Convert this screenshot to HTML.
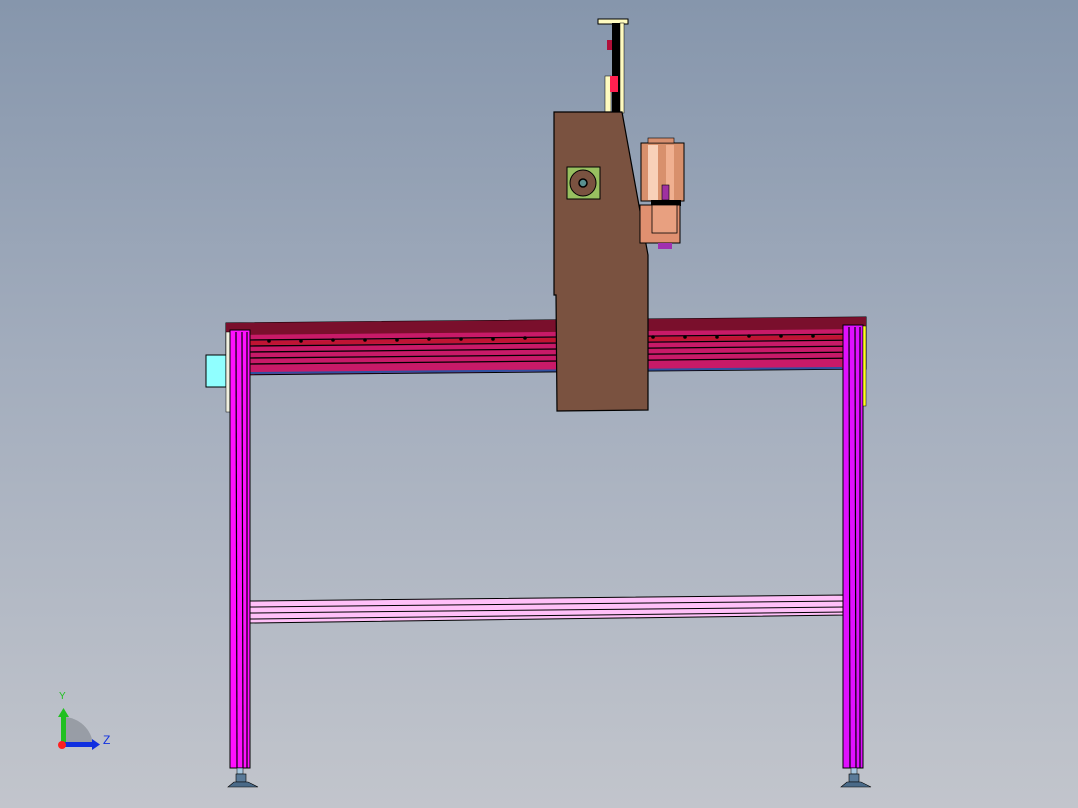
<!DOCTYPE html>
<html><head><style>
html,body{margin:0;padding:0;width:1078px;height:808px;overflow:hidden}
body{background:linear-gradient(#8696ac 0%,#a3adbd 45%,#c2c5cc 100%)}
svg{position:absolute;left:0;top:0}
</style></head><body>
<svg width="1078" height="808" viewBox="0 0 1078 808" xmlns="http://www.w3.org/2000/svg">
<!-- top beam -->
<polygon points="226,323 866,317 866,369 226,375" fill="#c81a68" stroke="#000" stroke-width="1"/>
<polygon points="226,323 866,317 866,329 226,335" fill="#7a0f2c"/>
<g stroke="#000" stroke-width="1.3">
<line x1="250" y1="340" x2="866" y2="334"/><line x1="250" y1="346" x2="866" y2="340"/>
<line x1="250" y1="352" x2="866" y2="346"/><line x1="250" y1="358" x2="866" y2="352"/>
<line x1="250" y1="364" x2="866" y2="358"/>
</g>
<polygon points="250,341 866,335 866,339 250,345" fill="#c01432"/>
<line x1="250" y1="373" x2="842" y2="368" stroke="#3050a0" stroke-width="2"/>
<g fill="#000">
<circle cx="269" cy="341" r="1.8"/><circle cx="301" cy="341" r="1.8"/><circle cx="333" cy="340" r="1.8"/><circle cx="365" cy="340" r="1.8"/><circle cx="397" cy="340" r="1.8"/><circle cx="429" cy="339" r="1.8"/><circle cx="461" cy="339" r="1.8"/><circle cx="493" cy="339" r="1.8"/><circle cx="525" cy="338" r="1.8"/>
<circle cx="653" cy="337" r="1.8"/><circle cx="685" cy="337" r="1.8"/><circle cx="717" cy="337" r="1.8"/><circle cx="749" cy="336" r="1.8"/><circle cx="781" cy="336" r="1.8"/><circle cx="813" cy="336" r="1.8"/>
</g>
<!-- cyan box -->
<rect x="206" y="355" width="20" height="32" fill="#90ffff" stroke="#000"/>
<rect x="226" y="332" width="4" height="80" fill="#f0f0e0" stroke="#000" stroke-width=".5"/>
<!-- lower crossbar -->
<polygon points="250,601 845,595 845,615 250,623" fill="#ffc0f8" stroke="#000"/>
<g stroke="#000" stroke-width="1"><line x1="250" y1="607" x2="845" y2="601"/><line x1="250" y1="613" x2="845" y2="607"/><line x1="250" y1="619" x2="845" y2="612"/></g>
<!-- legs -->
<rect x="230" y="330" width="20" height="438" fill="#ff10ff" stroke="#000"/>
<g stroke="#000" stroke-width="1.2"><line x1="236" y1="332" x2="237" y2="768"/><line x1="242" y1="332" x2="243" y2="768"/><line x1="247" y1="332" x2="247" y2="768"/></g>
<rect x="843" y="325" width="20" height="443" fill="#e010ff" stroke="#000"/>
<g stroke="#000" stroke-width="1.2"><line x1="849" y1="327" x2="850" y2="768"/><line x1="855" y1="327" x2="856" y2="768"/><line x1="860" y1="327" x2="860" y2="768"/></g>
<rect x="863" y="326" width="3" height="80" fill="#ffff20" stroke="#000" stroke-width=".5"/>
<!-- feet -->
<g>
<rect x="237" y="768" width="6" height="6" fill="#a8c8e0" stroke="#000" stroke-width=".5"/>
<rect x="236" y="774" width="10" height="8" fill="#5a7a98" stroke="#000" stroke-width=".6"/>
<polygon points="234,782 248,782 258,787 228,787" fill="#4a6a88" stroke="#000" stroke-width=".6"/>
<rect x="851" y="768" width="6" height="6" fill="#a8c8e0" stroke="#000" stroke-width=".5"/>
<rect x="849" y="774" width="10" height="8" fill="#5a7a98" stroke="#000" stroke-width=".6"/>
<polygon points="847,782 861,782 871,787 841,787" fill="#4a6a88" stroke="#000" stroke-width=".6"/>
</g>
<!-- vertical rail -->
<rect x="598" y="19" width="30" height="5" fill="#fffbc0" stroke="#000"/>
<rect x="612" y="23" width="12" height="90" fill="#000"/>
<rect x="620" y="23" width="4" height="90" fill="#fffbc0" stroke="#000" stroke-width=".5"/>
<rect x="605" y="76" width="6" height="36" fill="#fffbc0" stroke="#000" stroke-width=".5"/>
<rect x="607" y="40" width="5" height="10" fill="#b0103a"/>
<rect x="610" y="76" width="8" height="16" fill="#ff2050"/>
<!-- brown plate -->
<polygon points="554,112 622,112 638,200 648,255 648,410 557,411 556,295 554,295" fill="#7a5240" stroke="#000" stroke-width="1.2"/>
<!-- motor -->
<rect x="567" y="167" width="33" height="32" fill="#98c060" stroke="#000"/>
<circle cx="583" cy="183" r="13" fill="#7a5240" stroke="#000"/>
<circle cx="583" cy="183" r="4" fill="#5a9090" stroke="#000" stroke-width="1.5"/>
<!-- spindle -->
<rect x="641" y="143" width="43" height="58" fill="#d8906c" stroke="#000"/>
<rect x="648" y="145" width="10" height="55" fill="#f8d0b8"/>
<rect x="666" y="145" width="8" height="55" fill="#f0b090"/>
<rect x="648" y="138" width="26" height="5" fill="#d89070" stroke="#000" stroke-width=".6"/>
<rect x="662" y="185" width="7" height="15" fill="#a030a0" stroke="#000" stroke-width=".6"/>
<rect x="651" y="200" width="30" height="6" fill="#000"/>
<rect x="640" y="205" width="40" height="38" fill="#e09070" stroke="#000"/>
<rect x="652" y="205" width="25" height="28" fill="#e8a080" stroke="#000" stroke-width=".8"/>
<rect x="658" y="243" width="14" height="6" fill="#a030b0"/>
<!-- axis triad -->
<path d="M63,745 L63,717 A30,30 0 0 1 93,745 Z" fill="#8f949c" opacity=".8"/>
<rect x="61" y="715" width="5" height="30" fill="#20c020"/>
<polygon points="58,717 63.5,708 69,717" fill="#20c020"/>
<rect x="63" y="742" width="30" height="5" fill="#1030e0"/>
<polygon points="92,739 100,744.5 92,750" fill="#1030e0"/>
<circle cx="62" cy="745" r="4" fill="#ff2020"/>
<text x="59" y="699" font-family="Liberation Sans,sans-serif" font-size="10" fill="#20c020">Y</text>
<text x="103" y="744" font-family="Liberation Sans,sans-serif" font-size="12" fill="#1030e0">Z</text>
</svg>
</body></html>
